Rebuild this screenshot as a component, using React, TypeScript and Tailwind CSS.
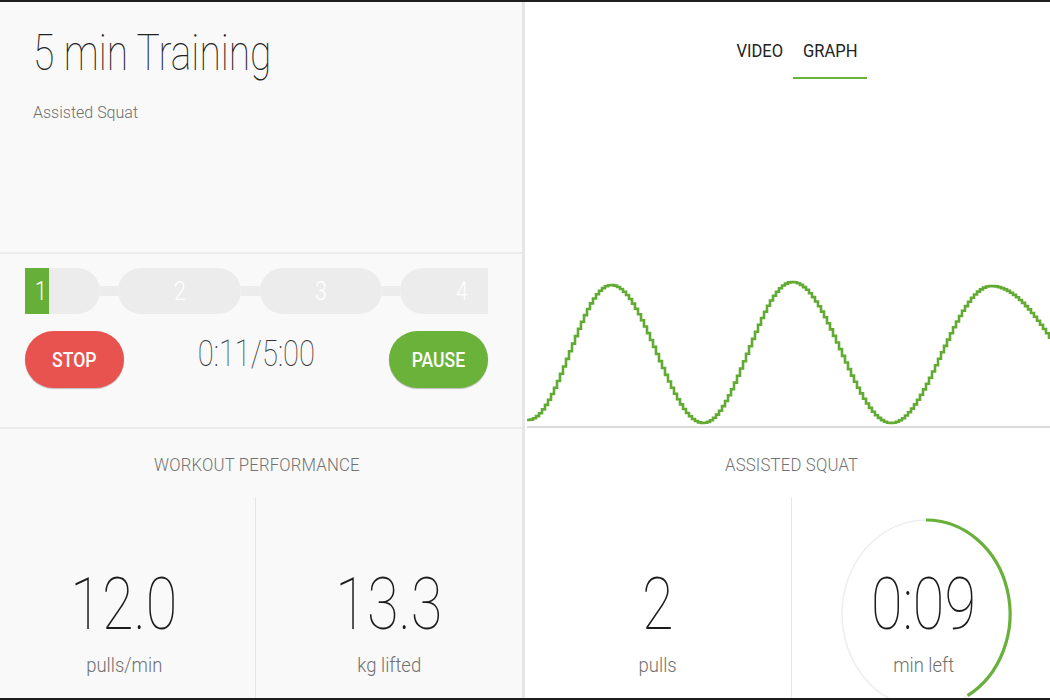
import React from 'react';

type StatProps = {
  value: string;
  unit: string;
  className?: string;
};

const peaks: [number, number][] = [
  [527, 420],
  [610, 285],
  [702, 423],
  [791, 282],
  [890, 423],
  [990, 286],
  [1130, 423],
];

function waveY(x: number) {
  for (let i = 0; i < peaks.length - 1; i++) {
    const [x0, y0] = peaks[i];
    const [x1, y1] = peaks[i + 1];
    if (x >= x0 && x <= x1) {
      const t = (x - x0) / (x1 - x0);
      return y0 + ((y1 - y0) * (1 - Math.cos(Math.PI * t))) / 2;
    }
  }
  return peaks[peaks.length - 1][1];
}

// stepped trace, like the sampled signal in the screenshot
function wavePath() {
  const ox = 525;
  const oy = 80;
  let d = `M ${527 - ox} ${(waveY(527) - oy).toFixed(1)}`;
  for (let x = 530; x <= 1053; x += 3) {
    d += ` H ${x - ox} V ${(waveY(x) - oy).toFixed(1)}`;
  }
  return d;
}

function Stat({ value, unit, className = '' }: StatProps) {
  return (
    <div className={`flex flex-1 flex-col items-center pt-[72px] ${className}`}>
      <span className="block scale-x-[0.8] text-[72px] leading-none font-thin text-[#1c1c1c]">{value}</span>
      <span className="mt-[14px] block scale-x-[0.88] text-[21px] leading-none font-light text-[#707070]">{unit}</span>
    </div>
  );
}

function SectionTitle({ children, className = '' }: { children: React.ReactNode; className?: string }) {
  return (
    <div className={`flex justify-center pt-[26px] ${className}`}>
      <span className="block scale-x-[0.88] text-[19px] leading-none font-light tracking-[0.2px] text-[#727272]">
        {children}
      </span>
    </div>
  );
}

function Connector({ width }: { width: string }) {
  return <div className={`${width} h-[10px] bg-[#ececec]`} />;
}

function ProgressTrack() {
  return (
    <div className="flex h-[46px] w-[463px] items-center text-[25px] leading-none font-light text-white">
      <div className="relative h-full w-[75px] rounded-r-full bg-[#ececec]">
        <div className="absolute inset-y-0 left-0 flex w-[24px] items-center justify-center bg-[#66b03a] pl-[8px]">
          <span className="block scale-x-[0.85]">1</span>
        </div>
      </div>
      <Connector width="w-[18px]" />
      <div className="flex h-full w-[123px] items-center justify-center rounded-full bg-[#ececec]">
        <span className="block scale-x-[0.85]">2</span>
      </div>
      <Connector width="w-[19px]" />
      <div className="flex h-full w-[122px] items-center justify-center rounded-full bg-[#ececec]">
        <span className="block scale-x-[0.85]">3</span>
      </div>
      <Connector width="w-[18px]" />
      <div className="flex h-full w-[88px] items-center justify-end rounded-l-full bg-[#ececec] pr-[19px]">
        <span className="block scale-x-[0.85]">4</span>
      </div>
    </div>
  );
}

function PillButton({ label, tone }: { label: string; tone: 'red' | 'green' }) {
  const color = tone === 'red' ? 'bg-[#e8524f]' : 'bg-[#6bb23b]';
  return (
    <button
      type="button"
      className={`flex h-[57px] w-[99px] items-center justify-center rounded-full ${color} text-[20px] font-medium text-white shadow-[0_1px_1px_rgba(0,0,0,0.25)]`}
    >
      <span className="block scale-x-[0.88]">{label}</span>
    </button>
  );
}

function LeftPanel() {
  return (
    <div className="flex w-[522px] flex-col bg-[#f9f9f9]">
      <div className="h-[252px] border-b-2 border-[#ebebeb] pl-[33px] pt-[26px]">
        <h1 className="block origin-left scale-x-[0.78] text-[50px] leading-none font-thin text-[#222]">
          5 min Training
        </h1>
        <p className="mt-[27px] text-[16px] leading-none font-light text-[#6e6e6e]">Assisted Squat</p>
      </div>

      <div className="h-[175px] border-b-2 border-[#ebebeb] pl-[25px] pt-[14px]">
        <ProgressTrack />
        <div className="mt-[17px] flex w-[463px] items-center justify-between">
          <PillButton label="STOP" tone="red" />
          <span className="mb-[11px] block scale-x-[0.81] text-[36px] leading-none font-thin text-[#333]">
            0:11/5:00
          </span>
          <PillButton label="PAUSE" tone="green" />
        </div>
      </div>

      <div className="flex flex-1 flex-col">
        <SectionTitle className="pr-[8px]">WORKOUT PERFORMANCE</SectionTitle>
        <div className="mt-[23px] flex flex-1">
          <div className="flex w-[255px]">
            <Stat value="12.0" unit="pulls/min" className="pr-[7px]" />
          </div>
          <div className="w-px bg-[#e6e6e6]" />
          <Stat value="13.3" unit="kg lifted" />
        </div>
      </div>
    </div>
  );
}

function RightPanel() {
  return (
    <div className="flex flex-1 flex-col bg-white">
      <div className="flex h-[78px] justify-center pl-[13px] text-[19px] leading-none text-[#222]">
        <div className="flex w-[72px] flex-col items-center pl-[6px] pt-[39px]">
          <span className="block scale-x-[0.87]">VIDEO</span>
        </div>
        <div className="flex w-[74px] flex-col items-center pt-[39px]">
          <span className="block scale-x-[0.87]">GRAPH</span>
          <div className="mt-[17px] h-[2px] w-[74px] bg-[#6bb23b]" />
        </div>
      </div>

      <svg width="525" height="349" viewBox="0 0 525 349" className="block">
        <line x1="2" y1="347" x2="525" y2="347" stroke="#cfcfcf" strokeWidth="1.6" />
        <path d={wavePath()} fill="none" stroke="#62ab33" strokeWidth="2.6" />
      </svg>

      <div className="flex flex-1 flex-col">
        <SectionTitle className="pl-[8px]">ASSISTED SQUAT</SectionTitle>
        <div className="mt-[23px] flex flex-1">
          <div className="flex w-[266px]">
            <Stat value="2" unit="pulls" />
          </div>
          <div className="w-px bg-[#e6e6e6]" />
          <div className="relative flex flex-1 pl-[6px]">
            <svg width="200" height="230" viewBox="0 0 200 230" className="absolute left-[34px] top-0">
              <ellipse cx="100" cy="117" rx="84" ry="94" fill="none" stroke="#eeeeee" strokeWidth="1.5" />
              <path
                d="M 100 23 A 84 94 0 0 1 141.6 198.7"
                fill="none"
                stroke="#68b03a"
                strokeWidth="3.2"
              />
            </svg>
            <Stat value="0:09" unit="min left" />
          </div>
        </div>
      </div>
    </div>
  );
}

export default function App() {
  return (
    <div className="flex h-[700px] w-[1050px] overflow-hidden border-y-2 border-[#1e1e1e] font-[family-name:Roboto,sans-serif]">
      <LeftPanel />
      <div className="w-[3px] bg-[#e6e6e6]" />
      <RightPanel />
    </div>
  );
}
